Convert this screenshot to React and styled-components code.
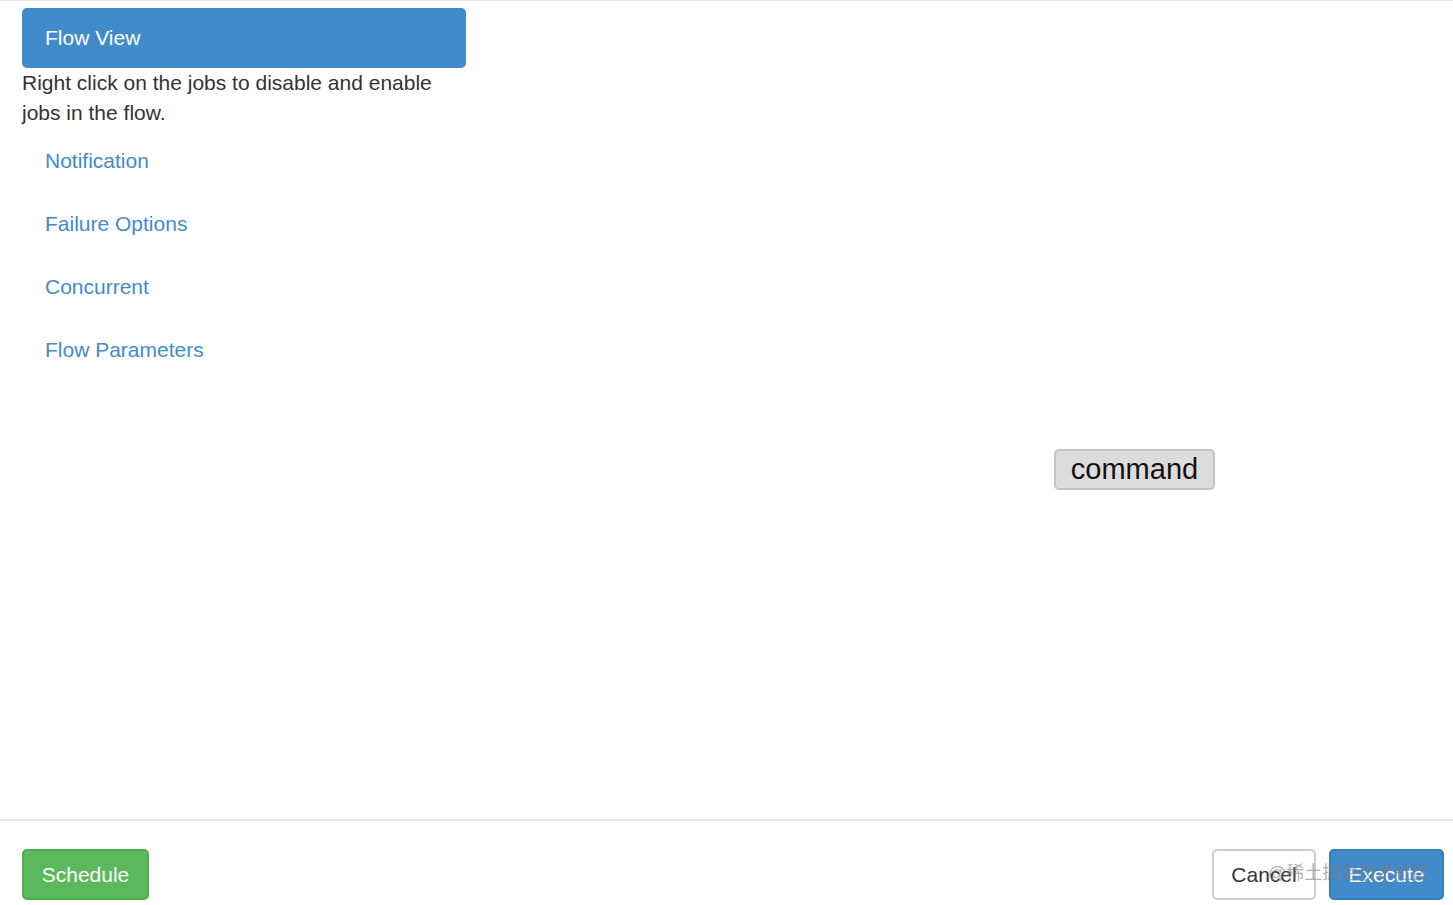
import React from 'react';
import styled, { createGlobalStyle } from 'styled-components';

const Global = createGlobalStyle`
  html, body { margin: 0; padding: 0; background: #fff; }
  body { font-family: "Liberation Sans", Arial, sans-serif; color: #333; }
`;

const Page = styled.div`
  width: 1453px;
  height: 905px;
  display: flex;
  flex-direction: column;
  border-top: 1px solid #e5e5e5;
  box-sizing: border-box;
  position: relative;
  overflow: hidden;
`;

const Body = styled.div`
  flex: 1;
  display: flex;
  padding: 7px 0 0 22px;
  border-bottom: 2px solid #e8e8e8;
`;

const Sidebar = styled.div`
  width: 444px;
  flex-shrink: 0;
`;

const ActiveTab = styled.div`
  height: 60px;
  box-sizing: border-box;
  background: #428bca;
  border-radius: 5px;
  color: #fff;
  font-size: 21px;
  padding: 0 23px;
  display: flex;
  align-items: center;
`;

const Hint = styled.p`
  margin: 0;
  font-size: 21px;
  line-height: 30px;
  color: #333;
`;

const NavList = styled.nav`
  display: flex;
  flex-direction: column;
  margin-top: 1px;
`;

const NavLink = styled.a`
  display: block;
  font-size: 21px;
  line-height: 29px;
  color: #428bca;
  text-decoration: none;
  padding: 17px 23px;
`;

const Canvas = styled.div`
  flex: 1;
  position: relative;
`;

const JobNode = styled.div`
  position: absolute;
  left: 588px;
  top: 441px;
  width: 161px;
  height: 41px;
  box-sizing: border-box;
  background: #dcdcdc;
  border: 2px solid #c4c4c4;
  border-radius: 5px;
  font-size: 29px;
  color: #111;
  display: flex;
  align-items: center;
  justify-content: center;
`;

const Footer = styled.div`
  height: 84px;
  flex-shrink: 0;
  display: flex;
  align-items: flex-start;
  padding: 28px 9px 0 22px;
  box-sizing: border-box;
`;

const Button = styled.button`
  height: 51px;
  font-family: inherit;
  font-size: 21px;
  border-radius: 5px;
  padding: 0;
  cursor: pointer;
  color: ${p => (p.$variant === 'default' ? '#333' : '#fff')};
  background: ${p =>
    p.$variant === 'success' ? '#5cb85c' : p.$variant === 'primary' ? '#428bca' : '#fff'};
  border: 2px solid
    ${p =>
      p.$variant === 'success' ? '#4cae4c' : p.$variant === 'primary' ? '#357ebd' : '#ccc'};
  margin-left: ${p => p.$gap || 0}px;
  width: ${p => p.$w}px;
`;

const Spacer = styled.div`
  flex: 1;
`;

const Watermark = styled.div`
  position: absolute;
  left: 1268px;
  top: 857px;
  font-size: 18px;
  color: rgba(120, 120, 120, 0.6);
  font-family: "Liberation Sans", "Noto Sans CJK SC", sans-serif;
  pointer-events: none;
`;

const links = ['Notification', 'Failure Options', 'Concurrent', 'Flow Parameters'];

export default function App() {
  return (
    <Page>
      <Global />
      <Body>
        <Sidebar>
          <ActiveTab>Flow View</ActiveTab>
          <Hint>Right click on the jobs to disable and enable jobs in the flow.</Hint>
          <NavList>
            {links.map(l => (
              <NavLink key={l} href="#">{l}</NavLink>
            ))}
          </NavList>
        </Sidebar>
        <Canvas>
          <JobNode>command</JobNode>
        </Canvas>
      </Body>
      <Footer>
        <Button $variant="success" $w={127}>Schedule</Button>
        <Spacer />
        <Button $variant="default" $w={104}>Cancel</Button>
        <Button $variant="primary" $w={115} $gap={13}>Execute</Button>
      </Footer>
      <Watermark>@稀土掘金技术社区</Watermark>
    </Page>
  );
}
